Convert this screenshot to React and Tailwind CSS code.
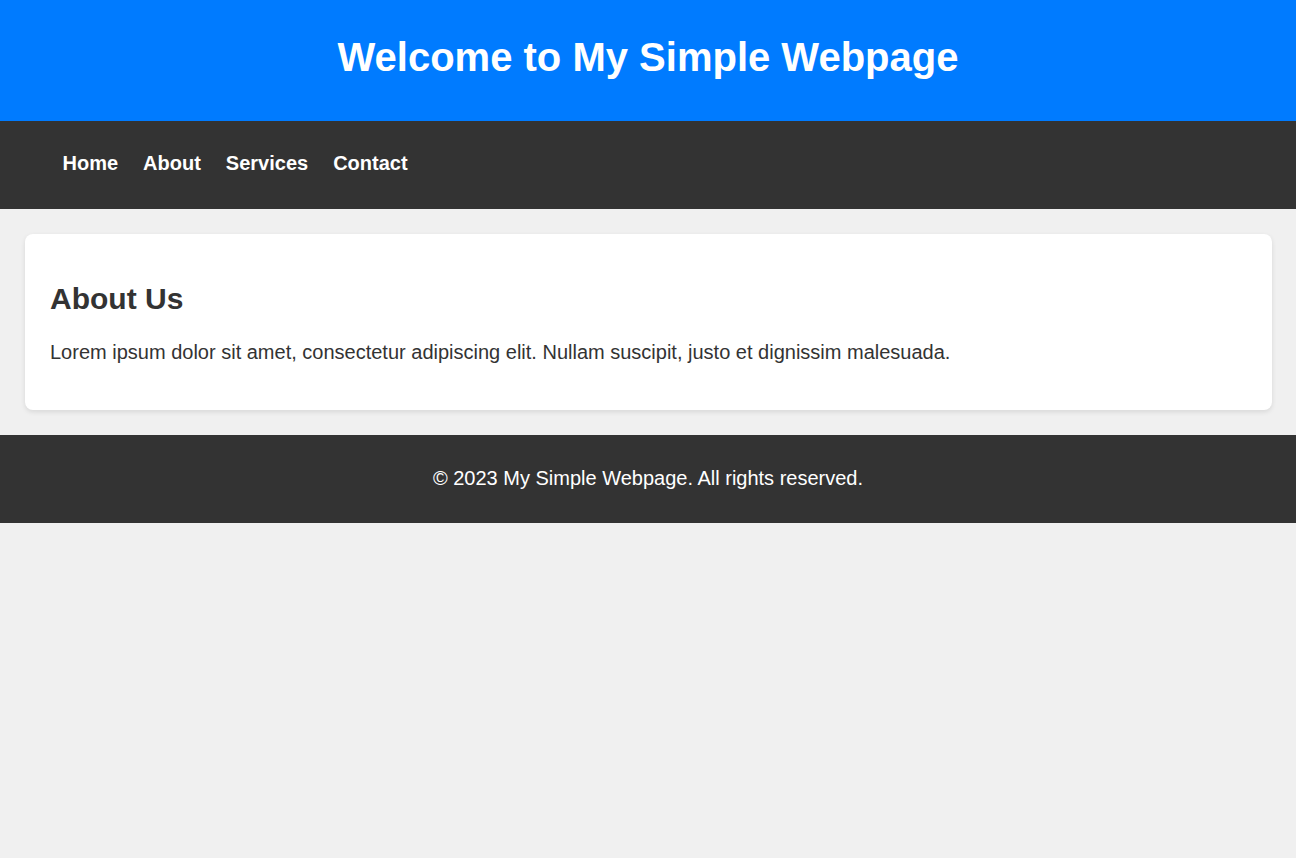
import React from 'react';

const links = ['Home', 'About', 'Services', 'Contact'];

const App = () => {
  return (
    <div className="min-h-[858px] bg-[#f0f0f0] font-['Liberation_Sans',Arial,sans-serif]">
      {/* Header */}
      <header className="bg-[#007bff] pt-[34px] pb-[41px] text-center text-white">
        <h1 className="text-[40px] font-bold leading-[46px]">Welcome to My Simple Webpage</h1>
      </header>

      {/* Navigation */}
      <nav className="bg-[#333333] pt-[30px] pb-[34px] pl-[62.5px]">
        <ul className="flex gap-[25px] text-[20px] leading-[24px]">
          {links.map((link) => (
            <li key={link}>
              <a href="#" className="font-bold text-white">
                {link}
              </a>
            </li>
          ))}
        </ul>
      </nav>

      {/* Main */}
      <main className="pl-[25px] pr-[24px] py-[25px]">
        <section className="rounded-lg bg-white p-[25px] text-[#333333] shadow-[0_2px_5px_rgba(0,0,0,0.1)]">
          <h2 className="mt-[23px] text-[30px] font-bold leading-[34px]">About Us</h2>
          <p className="mt-[25px] mb-[21px] text-[20px] leading-[23px]">
            Lorem ipsum dolor sit amet, consectetur adipiscing elit. Nullam suscipit, justo et dignissim malesuada.
          </p>
        </section>
      </main>

      {/* Footer */}
      <footer className="bg-[#333333] pt-[32px] pb-[33px] text-center text-white">
        <p className="text-[20px] leading-[23px]">© 2023 My Simple Webpage. All rights reserved.</p>
      </footer>
    </div>
  );
};

export default App;
